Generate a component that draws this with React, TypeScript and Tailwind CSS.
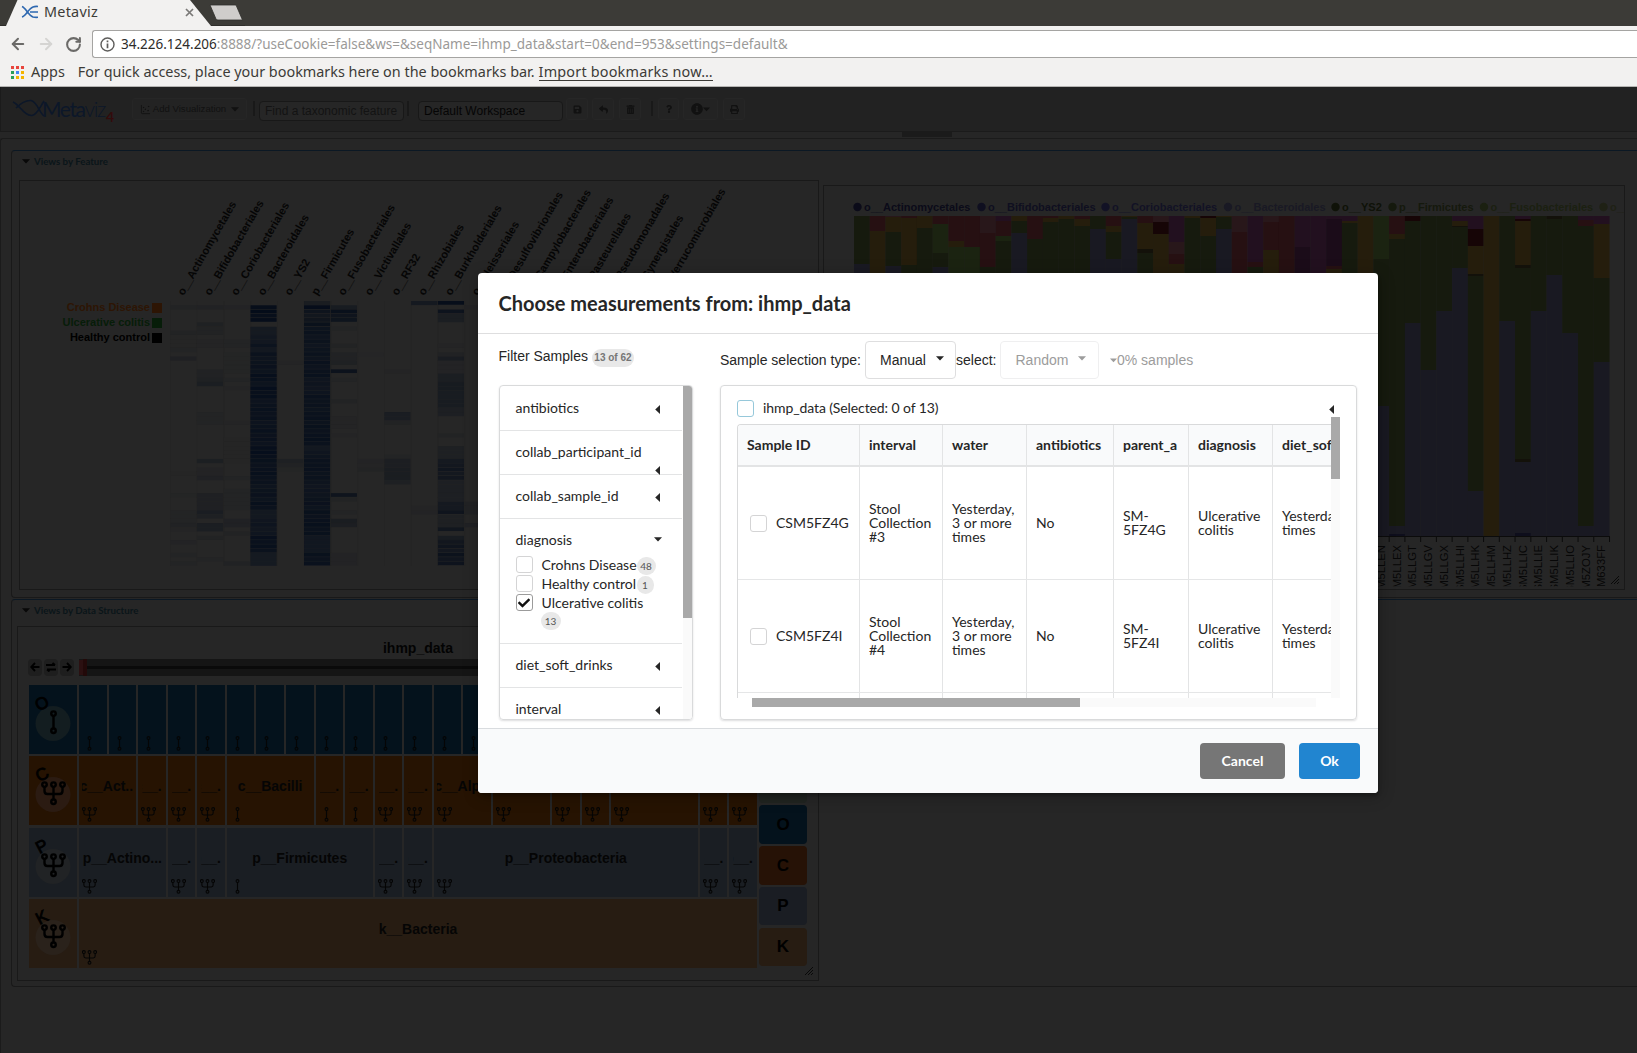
import React from "react";
import { FaSave, FaReply, FaTrashAlt, FaQuestion, FaInfoCircle, FaPrint, FaCheck } from "react-icons/fa";
import { ArrowLeft, ArrowRight, RotateCw, ChartScatter } from "lucide-react";

const ARIAL = "font-['Liberation_Sans',Arial,sans-serif]";
const LATO = "font-['Lato',sans-serif]";
const UBUNTU = "font-['Noto_Sans',sans-serif]";

/* ---------- shared glyphs ---------- */

function Caret({ dir, className = "" }: { dir: "down" | "left"; className?: string }) {
  return dir === "down" ? (
    <svg width="8" height="5" viewBox="0 0 8 5" className={className} fill="currentColor">
      <path d="M0 0.3H8L4 4.6Z" />
    </svg>
  ) : (
    <svg width="5" height="9" viewBox="0 0 5 9" className={className} fill="currentColor">
      <path d="M5 0V9L0.2 4.5Z" />
    </svg>
  );
}

function NodeGlyph({ leaf }: { leaf: boolean }) {
  return (
    <g fill="none" stroke="currentColor">
      <circle cx="8" cy="2.2" r="1.5" />
      <circle cx="8" cy="13.6" r="1.5" />
      <path d="M8 3.7V12.1" />
      {!leaf && (
        <>
          <circle cx="2" cy="2.2" r="1.5" />
          <circle cx="14" cy="2.2" r="1.5" />
          <path d="M2 3.7V6.5Q2 8.5 4 8.5H12Q14 8.5 14 6.5V3.7" />
        </>
      )}
    </g>
  );
}

function Grip() {
  return (
    <svg width="8" height="8" viewBox="0 0 8 8" className="absolute right-[5px] bottom-[5px]" stroke="#090909" strokeWidth="1">
      <path d="M0 8L8 0M3 8L8 3M6 8L8 6" />
    </svg>
  );
}

/* ---------- browser chrome ---------- */

const APP_DOTS = ["#e8453c", "#e8453c", "#e8453c", "#2a9d57", "#4285f4", "#f4b400", "#2a9d57", "#f4b400", "#f4b400"];

function BrowserChrome() {
  return (
    <div className={`h-[87px] shrink-0 bg-[#f2f1f0] border-b border-[#b5b4b2] ${UBUNTU} text-[#3c3b37]`}>
      <div className="relative flex h-[26px] bg-[#3c3b37]">
        <svg width="245" height="26" viewBox="0 0 245 26" className="absolute inset-0">
          <path d="M0 25.5H245" stroke="#2f2e2b" />
          <path d="M6 26L17.5 0H190L211 26Z" fill="#f2f1f0" />
          <path d="M210 5H236L242.5 20H218Q216.500 20 216 19Z" fill="#cfcdcb" stroke="#2f2e2b" strokeWidth="0.8" />
        </svg>
        <div className="relative flex w-[196px] items-center pl-[21px] pb-[2px]">
          <svg width="18" height="14" viewBox="0 0 18 14" fill="none" stroke="#2e68b0" strokeWidth="1.6">
            <path d="M1 1.5C5 3 7 10 12 12Q14 12.5 17 12.3M1 12C5 11 7 4 12 2Q14 1.2 17 1.5M9 7H17" />
          </svg>
          <span className="pl-[5px] text-[14.4px] leading-[20px] tracking-[0.25px]">Metaviz</span>
          <svg width="9" height="9" viewBox="0 0 9 9" className="ml-auto mr-[2px]" stroke="#7a7977" strokeWidth="1.7">
            <path d="M1 1L8 8M8 1L1 8" />
          </svg>
        </div>
      </div>
      <div className="flex h-[32px] items-end">
        <div className="flex h-[28px] w-[92px] items-center pl-[9px] text-[#6b6a68]">
          <ArrowLeft size={18} strokeWidth={2.6} />
          <ArrowRight size={18} strokeWidth={2.6} className="ml-[10px] text-[#d5d4d2]" />
          <RotateCw size={17} strokeWidth={2.9} className="ml-[10px]" />
        </div>
        <div className="flex h-[28px] flex-1 items-center rounded-l-[3px] border border-r-0 border-[#a5a4a2] bg-white pl-[7px] text-[13.5px] leading-[20px]">
          <svg width="15" height="15" viewBox="0 0 15 15" fill="none" stroke="#5e5d5b" strokeWidth="1.4">
            <circle cx="7.5" cy="7.5" r="6.5" />
            <path d="M7.5 6.5V11.2M7.5 3.6V5.2" strokeWidth="1.7" />
          </svg>
          <span className="pl-[6px] whitespace-nowrap text-[#2d2c2a]">
            34.226.124.206
            <span className="text-[#9b9a98]">:8888/?useCookie=false&amp;ws=&amp;seqName=ihmp_data&amp;start=0&amp;end=953&amp;settings=default&amp;</span>
          </span>
        </div>
      </div>
      <div className="flex h-[28px] items-center pl-[11px] text-[14.4px] leading-[20px] whitespace-nowrap">
        <div className="grid grid-cols-3 gap-[2px]">
          {APP_DOTS.map((c, i) => (
            <i key={i} className="h-[3px] w-[3px]" style={{ background: c }} />
          ))}
        </div>
        <span className="pl-[7px]">Apps</span>
        <span className="pl-[13px]">For quick access, place your bookmarks here on the bookmarks bar.</span>
        <span className="ml-[4px] border-b border-[#3c3b37] leading-[16px] tracking-[0.2px]">Import bookmarks now…</span>
      </div>
    </div>
  );
}

/* ---------- application toolbar ---------- */

function ToolButton({ className, children }: { className: string; children: React.ReactNode }) {
  return <div className={`flex h-[22px] items-center justify-center rounded-[3px] border border-[#262626] bg-[#232323] text-[#111] ${className}`}>{children}</div>;
}

function Toolbar() {
  return (
    <div className={`flex h-[45px] shrink-0 items-start border-b border-l border-[#1b1b1b] bg-[#222] pt-[11px] pl-[11px] ${ARIAL}`}>
      <div className="relative flex h-[26px] w-[120px]">
        <svg width="33" height="20" viewBox="0 0 33 20" fill="none" stroke="#0c1729" strokeWidth="1.6" className="shrink-0">
          <path d="M1 4C8 7 12 18 20 17.5C25 17 28 9 32 3M4 10C9 5 13 2 19 2.5C25 3.5 27 14 32 18" />
        </svg>
        <span className={`-ml-[3px] -mt-[1px] text-[21px] leading-[24px] tracking-[-1.4px] text-[#0c1729] ${LATO}`}>
          Meta<span className="font-light">viz</span>
        </span>
        <span className={`absolute left-[94px] top-[11px] text-[14px] font-bold leading-[16px] text-[#330b0b] ${LATO}`}>4</span>
      </div>
      <ToolButton className="w-[115px] text-[9.6px]">
        <ChartScatter size={11} strokeWidth={2} className="mr-[2px]" />
        Add Visualization
        <Caret dir="down" className="ml-[5px]" />
      </ToolButton>
      <i className="mt-[3px] ml-[6px] h-[15px] w-[2px] bg-[#191919]" />
      <div className="mt-[3px] ml-[4px] h-[20px] w-[145px] rounded-[4px] border border-[#181818] bg-[#262626] px-[5px] text-[12px] leading-[18px] text-[#131313]">Find a taxonomic feature</div>
      <i className="mt-[3px] ml-[3px] h-[15px] w-[2px] bg-[#191919]" />
      <div className="mt-[3px] ml-[9px] h-[20px] w-[145px] rounded-[4px] border border-[#181818] bg-[#262626] px-[5px] text-[12px] leading-[18px] text-[#050505]">Default Workspace</div>
      <ToolButton className="ml-[3px] w-[22px]"><FaSave size={9} /></ToolButton>
      <ToolButton className="ml-[4px] w-[22px]"><FaReply size={9} /></ToolButton>
      <ToolButton className="ml-[5px] w-[22px]"><FaTrashAlt size={9} /></ToolButton>
      <i className="mt-[3px] ml-[10px] h-[15px] w-[2px] bg-[#191919]" />
      <ToolButton className="ml-[5px] w-[21px]"><FaQuestion size={8} /></ToolButton>
      <ToolButton className="ml-[4px] w-[35px]"><FaInfoCircle size={12} /><Caret dir="down" className="w-[7px]" /></ToolButton>
      <ToolButton className="ml-[5px] w-[22px]"><FaPrint size={9} /></ToolButton>
    </div>
  );
}

/* ---------- heat map ---------- */

const HEAT_LABELS = [
  "o__Actinomycetales", "o__Bifidobacteriales", "o__Coriobacteriales", "o__Bacteroidales", "o__YS2", "p__Firmicutes",
  "o__Fusobacteriales", "o__Victivallales", "o__RF32", "o__Rhizobiales", "o__Burkholderiales", "o__Neisseriales",
  "o__Desulfovibrionales", "o__Campylobacterales", "o__Enterobacteriales", "o__Pasteurellales", "o__Pseudomonadales",
  "o__Synergistales", "o__Verrucomicrobiales",
];

// [first row, last row, intensity] runs for every column
const HEAT: [number, number, number][][] = [
  [[1, 1, 0.12], [7, 7, 0.12], [8, 10, 0.04], [11, 11, 0.08], [13, 13, 0.22], [40, 40, 0.04], [45, 45, 0.05], [49, 51, 0.09], [52, 52, 0.16], [53, 53, 0.07], [56, 56, 0.1], [59, 59, 0.08], [61, 61, 0.08]],
  [[1, 1, 0.16], [5, 5, 0.2], [6, 7, 0.12], [9, 10, 0.06], [16, 17, 0.15], [18, 18, 0.2], [19, 19, 0.32], [26, 28, 0.08], [37, 37, 0.28], [39, 40, 0.1], [41, 41, 0.18], [45, 48, 0.22], [49, 49, 0.34], [50, 50, 0.25], [52, 53, 0.32], [55, 55, 0.12], [60, 60, 0.08]],
  [[1, 1, 0.1], [9, 10, 0.09], [12, 16, 0.05], [18, 18, 0.09], [20, 20, 0.06], [28, 28, 0.06], [32, 37, 0.04], [41, 41, 0.08], [44, 48, 0.08], [51, 52, 0.18], [54, 54, 0.12], [61, 61, 0.15]],
  [[1, 4, 0.95], [6, 7, 0.3], [8, 8, 0.55], [9, 9, 0.45], [10, 10, 0.65], [11, 11, 0.4], [12, 16, 0.75], [17, 18, 0.95], [19, 19, 0.7], [20, 22, 0.95], [23, 33, 0.8], [34, 36, 0.95], [37, 41, 0.85], [42, 46, 0.75], [47, 48, 0.9], [49, 50, 0.4], [51, 54, 0.6], [55, 58, 0.9], [59, 61, 0.28]],
  [[14, 14, 0.06], [37, 37, 0.25], [38, 38, 0.14], [39, 39, 0.05]],
  [[0, 0, 0.35], [1, 1, 0.95], [2, 4, 0.62], [5, 5, 0.9], [6, 13, 0.7], [14, 17, 0.8], [18, 21, 0.65], [22, 28, 0.78], [29, 33, 0.85], [34, 34, 0.4], [35, 37, 0.7], [38, 41, 0.82], [42, 44, 0.6], [45, 48, 0.75], [49, 54, 0.85], [55, 58, 0.5], [59, 61, 0.85]],
  [[1, 1, 0.4], [2, 2, 0.85], [3, 3, 0.6], [4, 4, 0.75], [6, 6, 0.08], [10, 10, 0.12], [12, 13, 0.14], [14, 14, 0.2], [16, 16, 0.85], [18, 18, 0.08], [23, 23, 0.12], [27, 29, 0.06], [31, 31, 0.06], [45, 45, 0.65], [46, 46, 0.12], [49, 49, 0.08], [51, 51, 0.36], [52, 52, 0.3], [59, 61, 0.1]],
  [[12, 12, 0.03], [37, 37, 0.1], [38, 38, 0.07], [39, 39, 0.12]],
  [[16, 16, 0.07], [26, 27, 0.34], [28, 28, 0.12], [36, 36, 0.08], [37, 38, 0.3], [39, 41, 0.36], [42, 42, 0.24]],
  [[0, 0, 0.5], [48, 48, 0.06], [49, 49, 0.1]],
  [[0, 0, 1], [2, 2, 0.65], [3, 4, 0.32], [10, 10, 0.07], [12, 12, 0.16], [13, 13, 0.38], [14, 16, 0.1], [17, 18, 0.32], [19, 20, 0.44], [21, 24, 0.4], [25, 26, 0.26], [31, 31, 0.12], [34, 36, 0.24], [37, 37, 0.5], [38, 41, 0.6], [42, 46, 0.26], [47, 48, 0.5], [49, 49, 0.65], [50, 52, 0.24], [53, 53, 0.65], [55, 55, 0.4], [56, 58, 0.6], [59, 61, 0.72]],
  [[1, 1, 0.1], [47, 49, 0.14], [52, 52, 0.18]],
];

function heatColor(t: number) {
  const mix = (a: number, b: number) => Math.round(a + (b - a) * t);
  return `rgb(${mix(38, 4)},${mix(38, 12)},${mix(38, 25)})`;
}

const LEGEND = [
  { name: "Crohns Disease", color: "#2d1504" },
  { name: "Ulcerative colitis", color: "#071d09" },
  { name: "Healthy control", color: "#000000" },
];

function HeatMap() {
  const pitch = 26.77;
  const rowH = 4.27;
  return (
    <svg width="798" height="408" viewBox="20 181 798 408" className={`block ${ARIAL}`}>
      {HEAT.map((runs, c) => (
        <g key={c}>
          <rect x={170 + c * pitch} y={301} width={0.7} height={265} fill="#242424" />
          {runs.flatMap(([a, b, v]) =>
            Array.from({ length: b - a + 1 }, (_, k) => {
              const jitter = v > 0.5 ? (((a + k) * 7 + c * 3) % 5) * 0.04 - 0.08 : 0;
              return <rect key={`${a}-${k}`} x={170.2 + c * pitch} y={301 + (a + k) * rowH} width={26.1} height={v > 0.5 ? 3.7 : 4.1} fill={heatColor(v + jitter)} />;
            }),
          )}
          {(c === 3 || c === 5) && <rect x={170.2 + c * pitch} y={327} width={26.1} height={239} fill="#0d1520" opacity={0.4} />}
        </g>
      ))}
      {HEAT_LABELS.map((l, i) => (
        <text key={l} transform={`translate(${183.4 + i * pitch} 296.1) rotate(-60)`} fontSize="11" fontWeight="bold" fill="#050505">
          {l}
        </text>
      ))}
      {LEGEND.map((l, i) => (
        <g key={l.name} fill={l.color}>
          <text x="150" y={311 + i * 15} fontSize="11" fontWeight="bold" textAnchor="end">{l.name}</text>
          <rect x="152" y={303 + i * 15} width="10" height="10" />
        </g>
      ))}
    </svg>
  );
}

/* ---------- stacked bars ---------- */

const TAXA: Record<string, string> = {
  G: "#161a0e", g: "#1b2311", B: "#191922", Y: "#251d0c", R: "#261012", r: "#28171a", P: "#22101f",
  p: "#1b0c19", D: "#160506", N: "#0e0e1c", O: "#13110a",
};

// colour key followed by the y at which the segment ends
const BARS = [
  "G264 B536", "R231 Y536", "r217 Y232 G266 B536", "R218 Y265 G536", "Y228 G536", "R224 g253 G267 B536", "R241 Y247 g536", "R247 g536",
  "r233 R267 G536", "P221 R236 g241 G536", "Y221 G233 B536", "R239 G536", "R218 Y222 G536", "Y219 G536", "R219 Y226 G536", "G229 B536",
  "R226 Y232 G259 B536", "Y217 G219 B536", "R223 Y249 O253 G536", "r222 D234 Y536", "P242 r254 R264 Y536", "Y218 G536", "D218 Y236 G536",
  "Y217 G229 B536", "r232 R536", "P262 R267 G536", "r222 R250 Y536", "R536", "P247 p536", "P536", "P219 p266 R269 Y536", "P221 Y223 G536",
  "Y536", "g259 G406 B536", "R234 Y239 G526 B534 N536", "D221 G323 B536", "G370 B536", "G311 B536", "P221 Y226 O227 G268 B536",
  "P229 D246 Y274 O276 G491 B536", "Y536", "G321 B536", "P219 D221 Y265 O268 G459 O462 B533 N536", "G311 B536", "O219 G275 B536",
  "G333 B536", "P220 R226 G526 B536", "P224 Y278 G362 B536",
];

const SAMPLES = ["CSM5LLEN", "CSM5LLEX", "CSM5LLGT", "CSM5LLGV", "CSM5LLGX", "CSM5LLHI", "CSM5LLHK", "CSM5LLHM", "CSM5LLHZ", "CSM5LLIC", "CSM5LLIE", "CSM5LLIK", "CSM5LLIO", "CSM5ZOJY", "MSM633FF"];

const BAR_LEGEND: [number, string, string][] = [
  [857.5, "o__Actinomycetales", "#0b0b19"], [981.5, "o__Bifidobacteriales", "#0f0f20"], [1105.5, "o__Coriobacteriales", "#121225"],
  [1228, "o__Bacteroidales", "#191924"], [1335.5, "o__YS2", "#0f1208"], [1392.5, "p__Firmicutes", "#15190d"],
  [1484, "o__Fusobacteriales", "#1b2011"], [1603.5, "o__Victivallales", "#1f2115"],
];

function StackedBars() {
  const pitch = 15.74;
  return (
    <svg width="800" height="403" viewBox="824 186 800 403" className={`block ${ARIAL}`} shapeRendering="auto">
      <clipPath id="axisLabels"><rect x="850" y="540" width="770" height="46.3" /></clipPath>
      {BAR_LEGEND.map(([x, label, color]) => (
        <g key={label} fill={color}>
          <circle cx={x} cy="207" r="4.2" />
          <text x={x + 6.5} y="211" fontSize="11" fontWeight="bold">{label}</text>
        </g>
      ))}
      {BARS.map((bar, i) => {
        let y = 216;
        return bar.split(" ").map((seg, k) => {
          const end = Number(seg.slice(1));
          const top = y;
          y = end;
          return <rect key={`${i}-${k}`} x={854 + i * pitch} y={top} width={pitch} height={end - top} fill={TAXA[seg[0]]} />;
        });
      })}
      <path d="M854 536.5H1610" stroke="#0b0b0b" />
      <g clipPath="url(#axisLabels)">
        {SAMPLES.map((s, i) => (
          <text key={s} transform={`translate(${854 + (33 + i) * pitch + 11.5} 545) rotate(-90)`} fontSize="11.3" textAnchor="end" fill="#070707">{s}</text>
        ))}
      </g>
      {Array.from({ length: 49 }, (_, i) => (
        <rect key={i} x={853.5 + i * pitch} y="537" width="1" height="5" fill="#0b0b0b" />
      ))}
    </svg>
  );
}

/* ---------- icicle ---------- */

type Cell = { span: string; label?: string; leaf?: boolean };
const S1 = "col-span-1", S2 = "col-span-2", S3 = "col-span-3";

const ROWS: { key: string; bg: string; disc: string; cells: Cell[] }[] = [
  { key: "O", bg: "bg-[#04121c]", disc: "#131d20", cells: Array.from({ length: 23 }, () => ({ span: S1, leaf: true })) },
  {
    key: "C", bg: "bg-[#261302]", disc: "#2b1b12",
    cells: [
      { span: S2, label: "c__Act.." }, { span: S1, label: "c__." }, { span: S1, label: "c__." }, { span: S1, label: "c__." },
      { span: S3, label: "c__Bacilli", leaf: true }, { span: S1, label: "c__.", leaf: true }, { span: S1, label: "c__.", leaf: true },
      { span: S1, label: "c__." }, { span: S1, label: "c__." }, { span: S2, label: "c__Alp.." }, { span: S2, label: "c__Bet.." },
      { span: S1, label: "c__." }, { span: S1, label: "c__." }, { span: S3, label: "c__Gamm..." }, { span: S1, label: "c__." }, { span: S1, label: "c__." },
    ],
  },
  {
    key: "P", bg: "bg-[#1a1e23]", disc: "#212325",
    cells: [
      { span: S3, label: "p__Actino..." }, { span: S1, label: "p__." }, { span: S1, label: "p__." }, { span: "col-span-5", label: "p__Firmicutes", leaf: true },
      { span: S1, label: "p__." }, { span: S1, label: "p__." }, { span: "col-span-9", label: "p__Proteobacteria" }, { span: S1, label: "p__." }, { span: S1, label: "p__." },
    ],
  },
  { key: "K", bg: "bg-[#271c12]", disc: "#2a221b", cells: [{ span: "col-span-23", label: "k__Bacteria" }] },
];

function Icicle() {
  return (
    <div className="flex flex-col gap-[2.3px]">
      {ROWS.map((row) => (
        <div key={row.key} className="flex h-[69px] gap-[2px]">
          <div className={`w-[48px] ${row.bg}`}>
            <svg width="48" height="69" viewBox="0 0 48 69" className="text-black">
              <circle cx="24" cy="38.5" r="17.5" fill={row.disc} />
              <text transform="translate(13 18.500) rotate(-28)" fontSize="17" textAnchor="middle" dominantBaseline="central" fill="#000" strokeWidth="0.8" stroke="#000">{row.key}</text>
              <g transform="translate(12.5 25.3) scale(1.5)" strokeWidth="1.6"><NodeGlyph leaf={row.key === "O"} /></g>
            </svg>
          </div>
          <div className="grid w-[678px] grid-cols-[repeat(23,minmax(0,1fr))] gap-x-[2px]">
            {row.cells.map((cell, i) => (
              <div key={i} className={`flex min-w-0 flex-col ${cell.span} ${row.bg}`}>
                <div className={`mt-[21px] flex h-[20px] overflow-hidden ${cell.span === S1 ? "ml-[4px] mr-[4px] justify-end" : cell.span === S2 ? "mx-[3px] justify-end" : "mx-[3px] justify-center"}`}>
                  <span className="shrink-0 text-[14px] font-bold leading-[18px] text-[#050505]">{cell.label}</span>
                </div>
                <svg width="15" height="15" viewBox="0 0 16 16" className="mt-auto mb-[3px] ml-[3px] text-[#050505]" strokeWidth="1.2">
                  <NodeGlyph leaf={!!cell.leaf} />
                </svg>
              </div>
            ))}
          </div>
        </div>
      ))}
    </div>
  );
}

const LEVELS = [
  { key: "", bg: "bg-[#202420]" }, { key: "O", bg: "bg-[#04121c]" }, { key: "C", bg: "bg-[#261206]" }, { key: "P", bg: "bg-[#1a1d23]" }, { key: "K", bg: "bg-[#271c12]" },
];

function NavButton({ d }: { d: string }) {
  return (
    <div className="flex h-[17px] w-[14px] items-center justify-center rounded-[4px] bg-[#1e1e1e] pb-[2px]">
      <svg width="10" height="10" viewBox="0 0 10 10" fill="none" stroke="#000" strokeWidth="1.9"><path d={d} /></svg>
    </div>
  );
}

function IcicleCard() {
  return (
    <div className={`relative ml-[5px] mt-[8px] h-[355px] w-[802px] border border-[#191919] pl-[11px] ${ARIAL}`}>
      <div className="flex h-[32px] w-[778px] justify-center pt-[12px] text-[14px] font-bold leading-[18px] text-[#030303]">ihmp_data</div>
      <div className="-ml-px flex items-center gap-[2px]">
        <NavButton d="M9.5 5H1.5M5 1L1.2 5L5 9" />
        <NavButton d="M0 3H9M6.5 1L9 3M10 7.5H1M3.5 9.5L1 7.5" />
        <NavButton d="M0.5 5H8.5M5 1L8.8 5L5 9" />
        <div className="ml-[3px] flex h-[17px] w-[678px] items-center bg-[#151515]">
          <i className="h-[15px] w-[4px] bg-[#2b1011]" />
          <i className="h-full w-[4px] bg-[#220909]" />
          <i className="h-[3px] flex-1 bg-[#0a0a0a]" />
        </div>
      </div>
      <div className="mt-[9px] flex gap-[2px]">
        <Icicle />
        <div className="flex flex-col gap-[2.3px] pt-[79.6px]">
          {LEVELS.map((l, i) => (
            <div key={i} className={`flex h-[38.5px] w-[48px] items-center justify-center rounded-[4px] text-[17px] font-bold text-black ${l.bg}`}>{l.key}</div>
          ))}
        </div>
      </div>
      <Grip />
    </div>
  );
}

function PanelTitle({ children }: { children: string }) {
  return (
    <div className={`flex h-[18px] items-end pl-[10px] pb-[1px] text-[9.7px] font-bold leading-[13px] text-[#0a1519] ${LATO}`}>
      <Caret dir="down" className="mr-[4px] mb-[4px] text-[#080808]" />
      {children}
    </div>
  );
}

function Workspace() {
  return (
    <div className="flex-1 pt-[6px]">
      <div className="h-full rounded-tl-[3px] border-t border-l border-[#1b1b1b] pl-[10px] pt-[11px]">
        <div className="h-[448px] rounded-l-[4px] border border-r-0 border-[#191919] border-t-[#0b1824]">
          <PanelTitle>Views by Feature</PanelTitle>
          <div className="ml-[7px] mt-[11px] flex items-end gap-[4px]">
            <div className="h-[410px] w-[800px] border border-[#191919]"><HeatMap /></div>
            <div className="relative h-[405px] w-[802px] border border-[#191919]"><StackedBars /><Grip /></div>
          </div>
        </div>
        <div className="mt-[1px] h-[388px] rounded-l-[4px] border border-r-0 border-[#191919] border-t-[#0b1824]">
          <PanelTitle>Views by Data Structure</PanelTitle>
          <IcicleCard />
        </div>
      </div>
    </div>
  );
}

/* ---------- modal ---------- */

function Box({ checked, blue, className = "" }: { checked?: boolean; blue?: boolean; className?: string }) {
  const border = blue ? "border-[#96c8da]" : checked ? "border-[#9b9b9b]" : "border-[#d4d4d5]";
  return (
    <span className={`flex h-[17px] w-[17px] shrink-0 items-center justify-center rounded-[3px] border bg-white ${border} ${className}`}>
      {checked && <FaCheck size={12} className="text-[#111]" />}
    </span>
  );
}

function Count({ children, className = "" }: { children: string; className?: string }) {
  return <span className={`flex h-[18px] shrink-0 items-center justify-center rounded-full bg-[#e8e8e8] text-[10px] leading-[10px] whitespace-nowrap ${className}`}>{children}</span>;
}

function FilterItem({ label, low }: { label: string; low?: boolean }) {
  return (
    <div className="relative flex h-[44px] shrink-0 items-center border-b border-[#e3e4e5] pb-[2px] pl-[15.5px] pr-[22px]">
      <span>{label}</span>
      <Caret dir="left" className={low ? "absolute right-[22px] bottom-[-1px]" : "ml-auto mt-[3px]"} />
    </div>
  );
}

const OPTIONS = [
  { label: "Crohns Disease", count: "48", w: "w-[19px]" },
  { label: "Healthy control", count: "1", w: "w-[17px]" },
];

function FilterList() {
  return (
    <div className="flex h-[335px] w-[194px] overflow-hidden rounded-[4px] border border-[#d9dadb] shadow-[0_1px_2px_0_rgba(34,36,38,0.15)]">
      <div className="flex w-[182px] flex-col overflow-hidden pt-px">
        <FilterItem label="antibiotics" />
        <FilterItem label="collab_participant_id" low />
        <FilterItem label="collab_sample_id" />
        <div className="h-[125px] shrink-0 border-b border-[#e3e4e5] pl-[15.5px] pt-[10px]">
          <div className="flex h-[20px] items-center justify-between pr-[20px]">
            <span>diagnosis</span>
            <Caret dir="down" />
          </div>
          <div className="mt-[7px] flex flex-col gap-[2px]">
            {OPTIONS.map((o) => (
              <div key={o.label} className="flex h-[17px] items-center">
                <Box />
                <span className="w-[95px] pl-[9px] whitespace-nowrap leading-[17px]">{o.label}</span>
                <Count className={`mt-[3px] ml-[9px] text-[#555] ${o.w}`}>{o.count}</Count>
              </div>
            ))}
            <div className="flex h-[17px] items-center">
              <Box checked />
              <span className="pl-[9px] whitespace-nowrap leading-[17px]">Ulcerative colitis</span>
            </div>
          </div>
          <Count className="ml-[25px] mt-[1px] w-[20px] text-[#555]">13</Count>
        </div>
        <FilterItem label="diet_soft_drinks" />
        <FilterItem label="interval" />
      </div>
      <div className="ml-auto w-[9px] bg-[#fafafa]"><div className="h-[232px] bg-[#a9a9a9]" /></div>
    </div>
  );
}

const COLUMNS = [
  { name: "Sample ID", w: "w-[122px]" }, { name: "interval", w: "w-[83px]" }, { name: "water", w: "w-[84px]" },
  { name: "antibiotics", w: "w-[87px]" }, { name: "parent_a", w: "w-[75px]" }, { name: "diagnosis", w: "w-[84px]" }, { name: "diet_soft_drinks", w: "w-[120px]" },
];

const RECORDS = [
  ["CSM5FZ4G", "Stool\nCollection\n#3", "Yesterday,\n3 or more\ntimes", "No", "SM-\n5FZ4G", "Ulcerative\ncolitis", "Yesterday, 3\ntimes"],
  ["CSM5FZ4I", "Stool\nCollection\n#4", "Yesterday,\n3 or more\ntimes", "No", "SM-\n5FZ4I", "Ulcerative\ncolitis", "Yesterday, 3\ntimes"],
  ["", "", "", "", "", "", ""],
];

function SampleTable() {
  return (
    <div className="flex h-[274px] w-[594px] flex-col overflow-hidden rounded-tl-[4px] border-t border-l border-[#d9dadb]">
      <div className="flex h-[42px] w-[655px] shrink-0 border-b-2 border-[#e3e4e5] bg-[#f9fafb] font-bold">
        {COLUMNS.map((c) => (
          <div key={c.name} className={`flex shrink-0 items-center border-r border-[#e3e4e5] pb-[1px] pl-[9px] whitespace-nowrap ${c.w}`}>{c.name}</div>
        ))}
      </div>
      {RECORDS.map((r, i) => (
        <div key={i} className="flex h-[113px] w-[655px] shrink-0 border-b border-[#e5e6e7]">
          {COLUMNS.map((c, k) => (
            <div key={c.name} className={`flex shrink-0 items-center border-r border-[#e3e4e5] pl-[9px] leading-[14px] whitespace-pre ${c.w}`}>
              {k === 0 && r[0] !== "" && <Box className="ml-[3px] mr-[9px]" />}
              {r[k]}
            </div>
          ))}
        </div>
      ))}
    </div>
  );
}

function Modal() {
  return (
    <div className={`absolute left-[478px] top-[273px] flex h-[520px] w-[900px] flex-col overflow-hidden rounded-[4px] bg-white text-[14px] text-[#262626] shadow-[1px_3px_3px_0_rgba(0,0,0,0.2),1px_3px_15px_2px_rgba(0,0,0,0.2)] ${LATO}`}>
      <div className="flex h-[61px] shrink-0 items-center border-b border-[#dededf] pl-[20.5px] text-[20px] font-bold">Choose measurements from: ihmp_data</div>
      <div className="flex flex-1 pl-[21px]">
        <div className="w-[221px]">
          <div className={`-ml-[0.5px] flex h-[51px] items-start pt-[15px] ${ARIAL}`}>
            <span className="-mt-px leading-[16px]">Filter Samples</span>
            <Count className="ml-[4px] w-[42px] font-bold text-[#767676]">13 of 62</Count>
          </div>
          <FilterList />
        </div>
        <div>
          <div className={`flex h-[51px] items-start pt-[7px] ${ARIAL}`}>
            <span className="w-[145px] leading-[38px]">Sample selection type:</span>
            <div className="flex h-[38px] w-[91px] items-center rounded-[4px] border border-[#dededf] pl-[14px]">
              Manual
              <Caret dir="down" className="ml-[10px] mb-[3px]" />
            </div>
            <span className="w-[44px] leading-[38px]">select:</span>
            <div className="flex h-[38px] w-[99px] items-center rounded-[4px] border border-[#efeff0] pl-[14.5px] text-[#9c9c9c]">
              Random
              <Caret dir="down" className="ml-[10px] mb-[3px]" />
            </div>
            <div className="ml-[11px] flex h-[38px] items-center text-[#9c9c9c]">
              <Caret dir="down" className="w-[7px]" />
              0% samples
            </div>
          </div>
          <div className="h-[335px] w-[637px] rounded-[4px] border border-[#d9dadb] pl-[16px] shadow-[0_1px_2px_0_rgba(34,36,38,0.15)]">
            <div className="flex h-[38px]">
              <div className="flex w-[597px] items-center pt-[6px]">
                <Box blue />
                <span className="-mt-px pl-[9px] tracking-[-0.1px]">ihmp_data (Selected: 0 of 13)</span>
                <Caret dir="left" className="ml-auto mt-[3px]" />
              </div>
            </div>
            <div className="flex">
              <SampleTable />
              <div className="-mt-[7px] h-[281px] w-[9px] bg-[#fafafa]"><div className="h-[62px] bg-[#a9a9a9]" /></div>
            </div>
            <div className="ml-[15px] h-[9px] w-[564px] bg-[#fafafa]"><div className="h-full w-[328px] bg-[#a9a9a9]" /></div>
          </div>
        </div>
      </div>
      <div className="flex h-[65px] shrink-0 items-center justify-end gap-[14px] border-t border-[#d9dcdf] bg-[#f9fafb] pr-[18px] font-bold text-white">
        <div className="flex h-[36px] w-[85px] items-center justify-center rounded-[4px] bg-[#767676] pb-px">Cancel</div>
        <div className="flex h-[36px] w-[61px] items-center justify-center rounded-[4px] bg-[#2185d0] pb-px">Ok</div>
      </div>
    </div>
  );
}

export default function App() {
  return (
    <div className="relative flex h-[1053px] w-[1637px] flex-col overflow-hidden bg-[#262626]">
      <BrowserChrome />
      <Toolbar />
      <div className="absolute left-[902px] top-[132px] h-[5px] w-[50px] bg-[#1b1b1b]" />
      <Workspace />
      <Modal />
    </div>
  );
}
